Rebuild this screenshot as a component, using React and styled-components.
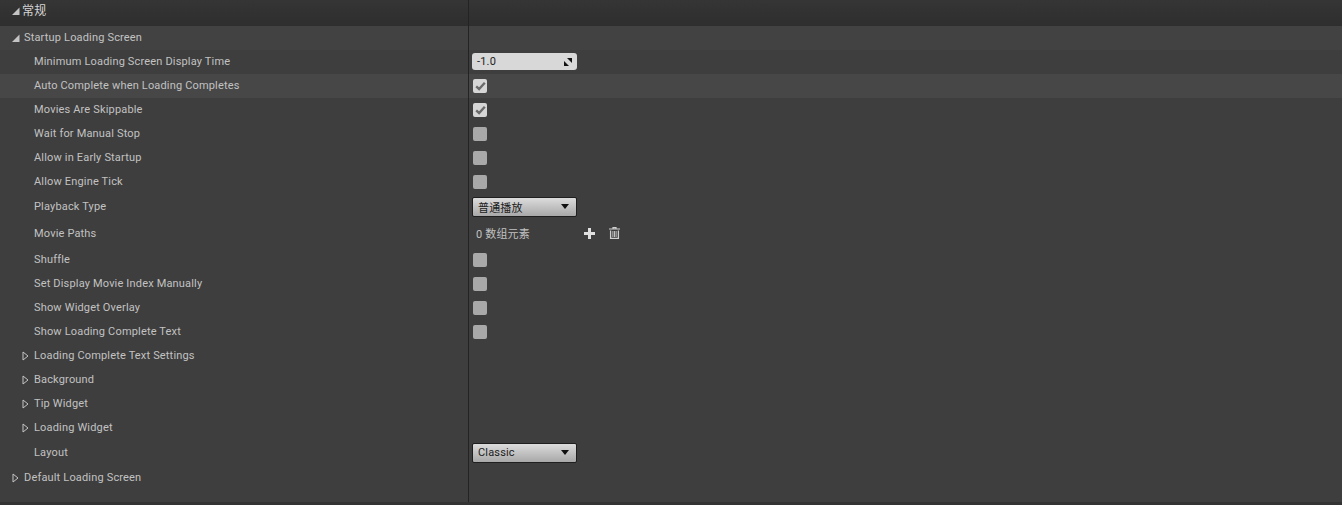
import React from "react";
import styled, { createGlobalStyle } from "styled-components";

const Global = createGlobalStyle`
  html, body { margin: 0; padding: 0; background: #3e3e3e; overflow: hidden; }
  #root { width: 1342px; height: 505px; }
`;

const Page = styled.div`
  width: 1342px;
  height: 505px;
  display: flex;
  flex-direction: column;
  background: #3e3e3e;
  font-family: Roboto, "Noto Sans CJK SC", sans-serif;
  font-size: 11px;
  letter-spacing: 0.17px;
  color: #c8c8c8;
`;

const Row = styled.div`
  display: grid;
  grid-template-columns: 468px 1fr;
  height: ${(p) => p.$h || 24}px;
  flex: none;
  background: ${(p) => (p.$hl ? "#474747" : p.$bg || "transparent")};
`;

const HeaderRow = styled(Row)`
  height: 26px;
  background: linear-gradient(#353535, #2e2e2e);
`;

const FillRow = styled(Row)`
  height: 12px;
`;

const BottomBar = styled.div`
  height: 3px;
  flex: none;
  background: #333333;
`;

const NameCell = styled.div`
  display: flex;
  align-items: center;
  padding-left: ${(p) => p.$indent}px;
  padding-bottom: ${(p) => p.$lift ?? 0}px;
  min-width: 0;
`;

const ArrowSlot = styled.span`
  width: 10px;
  height: 10px;
  display: flex;
  align-items: center;
  justify-content: center;
  margin-left: -1px;
  margin-right: ${(p) => p.$gap ?? 4}px;
  flex: none;
`;

const Label = styled.span`
  white-space: nowrap;
  line-height: 14px;
  color: ${(p) => p.$color || "#c2c2c2"};
  font-size: ${(p) => p.$size || 11}px;
`;

const ValueCell = styled.div`
  display: flex;
  align-items: center;
  border-left: 1px solid #232323;
  padding-left: 3px;
`;

const NumberBox = styled.div`
  width: 105px;
  height: 17px;
  margin-bottom: 1px;
  box-sizing: border-box;
  background: #d8d8d8;
  border-radius: 3px;
  display: flex;
  align-items: center;
  justify-content: space-between;
  padding: 0 5px;
  color: #222;
`;

const Check = styled.div`
  width: 14px;
  height: 14px;
  border-radius: 2px;
  margin-left: 1px;
  display: flex;
  align-items: center;
  justify-content: center;
  background: ${(p) => (p.$on ? "#d6d6d6" : "#a9a9a9")};
`;

const Select = styled.div`
  width: 105px;
  height: 20px;
  box-sizing: border-box;
  border: 1px solid #1f1f1f;
  border-radius: 2px;
  background: linear-gradient(#dcdcdc, #a8a8a8);
  display: flex;
  align-items: center;
  justify-content: space-between;
  padding: 0 7px 0 5px;
  color: #1c1c1c;
  margin-bottom: 1px;
`;

const ArrayValue = styled.div`
  display: flex;
  align-items: center;
  padding-left: 4px;
  margin-bottom: 2px;
`;

const ArrayCount = styled.span`
  width: 107px;
  color: #c2c2c2;
`;

const IconButton = styled.span`
  width: 12px;
  height: 12px;
  display: flex;
  align-items: center;
  justify-content: center;
  margin-right: 13px;
`;

const Arrow = ({ open }) =>
  open ? (
    <svg width="9" height="9" viewBox="0 0 9 9">
      <path d="M8.5 .5V8H1Z" fill="#c4c4c4" />
    </svg>
  ) : (
    <svg width="7" height="10" viewBox="0 0 7 10">
      <path d="M1 1L6 5L1 9Z" fill="none" stroke="#c4c4c4" strokeWidth="1" />
    </svg>
  );

const Tick = () => (
  <svg width="11" height="10" viewBox="0 0 11 10">
    <path d="M1.2 5.4L4.1 8L9.8 1.8" fill="none" stroke="#6a6a6a" strokeWidth="2.4" />
  </svg>
);

const Caret = () => (
  <svg width="8" height="5" viewBox="0 0 8 5">
    <path d="M0 0H8L4 5Z" fill="#111" />
  </svg>
);

const Resize = () => (
  <svg width="8" height="8" viewBox="0 0 8 8">
    <path d="M3 0H8V5Z" fill="#111" />
    <path d="M0 3L5 8H0Z" fill="#111" />
  </svg>
);

const Plus = () => (
  <svg width="11" height="11" viewBox="0 0 11 11">
    <path d="M5.5 0V11M0 5.5H11" stroke="#e0e0e0" strokeWidth="3" />
  </svg>
);

const Trash = () => (
  <svg width="11" height="12" viewBox="0 0 11 12">
    <path d="M0 2H11M4 2V.7H7V2" fill="none" stroke="#d0d0d0" strokeWidth="1.2" />
    <path d="M1.6 3.5V11.4H9.4V3.5" fill="none" stroke="#d0d0d0" strokeWidth="1.3" />
    <path d="M3.9 4V10M5.5 4V10M7.1 4V10" stroke="#d0d0d0" strokeWidth=".9" />
  </svg>
);

const rows = [
  { label: "Startup Loading Screen", indent: 11, arrow: "open", bg: "#424242" },
  { label: "Minimum Loading Screen Display Time", indent: 34, value: "number" },
  { label: "Auto Complete when Loading Completes", indent: 34, value: "on", hl: true },
  { label: "Movies Are Skippable", indent: 34, value: "on" },
  { label: "Wait for Manual Stop", indent: 34, value: "off" },
  { label: "Allow in Early Startup", indent: 34, value: "off" },
  { label: "Allow Engine Tick", indent: 34, value: "off" },
  { label: "Playback Type", indent: 34, value: "select", text: "普通播放", h: 26 },
  { label: "Movie Paths", indent: 34, value: "array", h: 28 },
  { label: "Shuffle", indent: 34, value: "off" },
  { label: "Set Display Movie Index Manually", indent: 34, value: "off" },
  { label: "Show Widget Overlay", indent: 34, value: "off" },
  { label: "Show Loading Complete Text", indent: 34, value: "off" },
  { label: "Loading Complete Text Settings", indent: 21, arrow: "closed" },
  { label: "Background", indent: 21, arrow: "closed" },
  { label: "Tip Widget", indent: 21, arrow: "closed" },
  { label: "Loading Widget", indent: 21, arrow: "closed" },
  { label: "Layout", indent: 34, value: "select", text: "Classic", h: 26 },
  { label: "Default Loading Screen", indent: 11, arrow: "closed" },
];

function Value({ row }) {
  switch (row.value) {
    case "number":
      return (
        <NumberBox>
          -1.0
          <Resize />
        </NumberBox>
      );
    case "on":
      return (
        <Check $on>
          <Tick />
        </Check>
      );
    case "off":
      return <Check />;
    case "select":
      return (
        <Select>
          {row.text}
          <Caret />
        </Select>
      );
    case "array":
      return (
        <ArrayValue>
          <ArrayCount>0 数组元素</ArrayCount>
          <IconButton>
            <Plus />
          </IconButton>
          <IconButton>
            <Trash />
          </IconButton>
        </ArrayValue>
      );
    default:
      return null;
  }
}

export default function App() {
  return (
    <Page>
      <Global />
      <HeaderRow>
        <NameCell $indent={11} $lift={4}>
          <ArrowSlot $gap={2}>
            <Arrow open />
          </ArrowSlot>
          <Label $size={12} $color="#d4d4d4">
            常规
          </Label>
        </NameCell>
        <ValueCell />
      </HeaderRow>
      {rows.map((r) => (
        <Row key={r.label} $h={r.h} $hl={r.hl} $bg={r.bg}>
          <NameCell $indent={r.indent}>
            {r.arrow && (
              <ArrowSlot>
                <Arrow open={r.arrow === "open"} />
              </ArrowSlot>
            )}
            <Label>{r.label}</Label>
          </NameCell>
          <ValueCell>
            <Value row={r} />
          </ValueCell>
        </Row>
      ))}
      <FillRow>
        <NameCell $indent={0} />
        <ValueCell />
      </FillRow>
      <BottomBar />
    </Page>
  );
}
